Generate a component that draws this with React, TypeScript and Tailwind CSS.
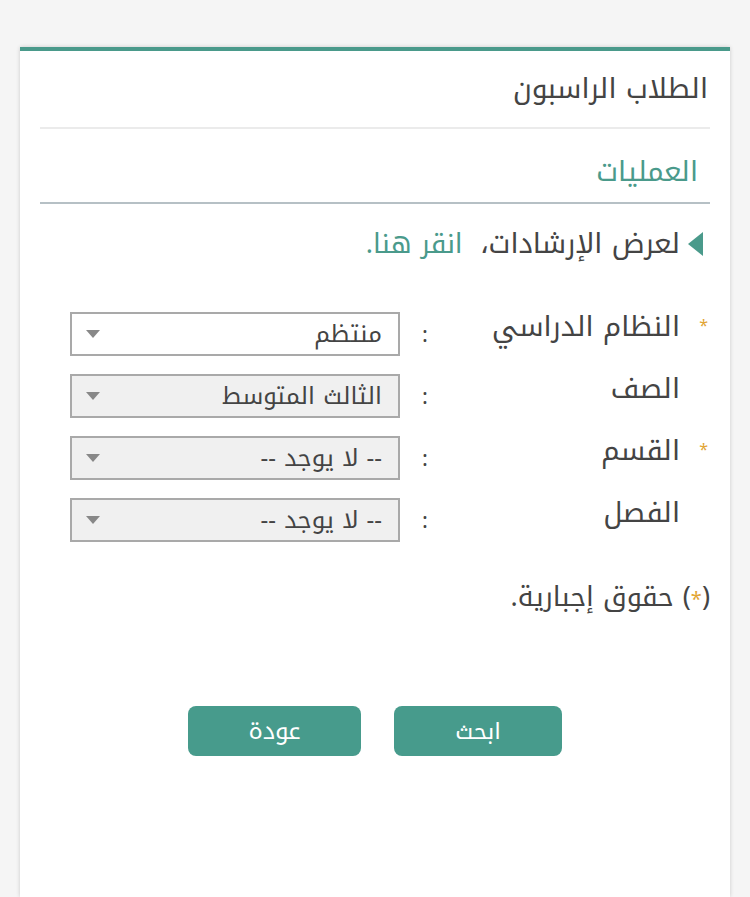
import React from "react";

const font = { fontFamily: '"Noto Kufi Arabic", "Droid Arabic Kufi", "DejaVu Sans", "Noto Sans", sans-serif' };

function Select({ value, white }: { value: string; white?: boolean }) {
  return (
    <div
      className={`flex h-[44px] w-[330px] items-center justify-between border-2 border-[#a9a9a9] pr-[16px] pl-[14px] ${white ? "bg-white" : "bg-[#f0f0f0]"}`}
    >
      <span className="text-[24px] leading-none text-[#444]">{value}</span>
      <span className="h-0 w-0 border-x-[7px] border-t-[8px] border-x-transparent border-t-[#888]" />
    </div>
  );
}

function Row({ label, value, required, white }: { label: string; value: string; required?: boolean; white?: boolean }) {
  return (
    <div className="flex h-[44px] items-start">
      <div className="w-[30px] pt-[6px] pr-[2px] text-[16px] leading-none text-[#e2a534]">{required ? "*" : ""}</div>
      <div className="w-[243px] text-[28px] leading-[30px] text-[#444]">{label}</div>
      <div className="flex w-[37px] justify-start pr-[9px] pt-[8px] text-[22px] leading-[30px] text-[#444]">:</div>
      <Select value={value} white={white} />
    </div>
  );
}

export default function App() {
  return (
    <div className="min-h-[897px] bg-[#f5f5f5] pt-[47px]" style={font}>
      <div dir="rtl" className="mx-[20px] min-h-[850px] border-t-4 border-[#4a9a8b] bg-white px-[20px] shadow-[0_0_4px_rgba(0,0,0,0.18)]">
        <div className="flex h-[76px] items-center pr-[2px] text-[28px] leading-none text-[#444]">الطلاب الراسبون</div>
        <div className="h-[2px] bg-[#ebebeb]" />
        <div className="flex h-[73px] items-center pt-[12px] pr-[12px] text-[28px] leading-none text-[#4a9a8b]">العمليات</div>
        <div className="h-[2px] bg-[#b6c0c5]" />
        <div className="flex h-[80px] items-center gap-[8px] pr-[7px]">
          <span className="h-0 w-0 border-y-[12px] border-r-[15px] border-y-transparent border-r-[#4a9a8b]" />
          <span className="text-[28px] leading-none text-[#444]">لعرض الإرشادات،</span>
          <span className="mr-[10px] text-[27px] leading-none text-[#4a9a8b]">انقر هنا.</span>
        </div>
        <div className="mt-[28px] flex flex-col gap-[18px]">
          <Row label="النظام الدراسي" value="منتظم" required white />
          <Row label="الصف" value="الثالث المتوسط" />
          <Row label="القسم" value="-- لا يوجد --" required />
          <Row label="الفصل" value="-- لا يوجد --" />
        </div>
        <div className="mt-[40px] h-[30px] text-[27px] leading-[30px] text-[#444]">
          (<span className="text-[20px] text-[#e2a534]">*</span>) حقوق إجبارية.
        </div>
        <div className="mt-[94px] flex justify-center gap-[33px]">
          <button className="h-[50px] w-[168px] rounded-[8px] bg-[#479b8c] text-[23px] leading-none text-white">ابحث</button>
          <button className="h-[50px] w-[173px] rounded-[8px] bg-[#479b8c] text-[24px] leading-none text-white">عودة</button>
        </div>
      </div>
    </div>
  );
}
